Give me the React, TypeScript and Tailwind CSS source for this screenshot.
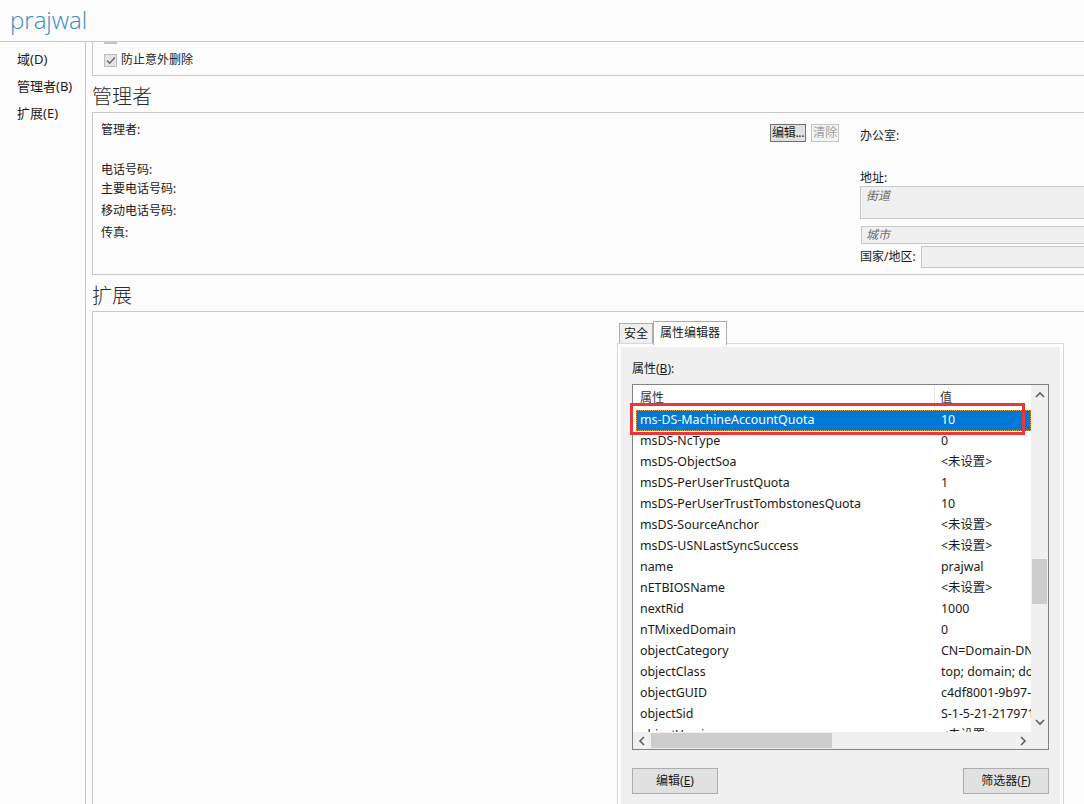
import React from "react";

const FONT = '"Noto Sans", "Noto Sans CJK SC", sans-serif';

const rows: [string, string][] = [
  ["ms-DS-MachineAccountQuota", "10"],
  ["msDS-NcType", "0"],
  ["msDS-ObjectSoa", "<未设置>"],
  ["msDS-PerUserTrustQuota", "1"],
  ["msDS-PerUserTrustTombstonesQuota", "10"],
  ["msDS-SourceAnchor", "<未设置>"],
  ["msDS-USNLastSyncSuccess", "<未设置>"],
  ["name", "prajwal"],
  ["nETBIOSName", "<未设置>"],
  ["nextRid", "1000"],
  ["nTMixedDomain", "0"],
  ["objectCategory", "CN=Domain-DNS,CN=Schema,CN=Configuration"],
  ["objectClass", "top; domain; domainDNS"],
  ["objectGUID", "c4df8001-9b97-4c1e-8f0a-2d1e3a4b5c6d"],
  ["objectSid", "S-1-5-21-2179712345-1234567890"],
  ["objectVersion", "<未设置>"],
];

function Chevron({ dir }: { dir: "up" | "down" | "left" | "right" }) {
  const d =
    dir === "up"
      ? "M1 6 L5 2 L9 6"
      : dir === "down"
      ? "M1 2 L5 6 L9 2"
      : dir === "left"
      ? "M6 1 L2 5 L6 9"
      : "M2 1 L6 5 L2 9";
  const w = dir === "up" || dir === "down" ? 10 : 8;
  const h = dir === "up" || dir === "down" ? 8 : 10;
  return (
    <svg width={w} height={h} viewBox={`0 0 ${w} ${h}`}>
      <path d={d} fill="none" stroke="#606060" strokeWidth="1.6" />
    </svg>
  );
}

export default function App() {
  return (
    <div
      className="w-[1084px] h-[804px] overflow-hidden bg-[#fcfcfc] flex flex-col text-[#1a1a1a]"
      style={{ fontFamily: FONT }}
    >
      {/* Header */}
      <div className="h-[42px] border-b border-[#c8c8c8] pl-[10px] flex items-center shrink-0">
        <span
          className="text-[24px] font-light text-[#3a8ac4] leading-none -mt-[2px]"
          style={{ fontFamily: '"Open Sans", "Noto Sans", sans-serif' }}
        >
          prajwal
        </span>
      </div>

      <div className="flex flex-1 min-h-0">
        {/* Nav */}
        <div className="w-[86px] shrink-0 border-r border-[#c8c8c8] pt-[4px] pl-[17px] text-[13px]">
          <div className="h-[27px] flex items-center">域(D)</div>
          <div className="h-[27px] flex items-center">管理者(B)</div>
          <div className="h-[27px] flex items-center">扩展(E)</div>
        </div>

        {/* Main */}
        <div className="flex-1 min-w-0 pl-[6px] flex flex-col">
          {/* Box 1 (partially scrolled) */}
          <div className="h-[34px] shrink-0 border-l border-b border-[#c8c8c8] pl-[11px] flex flex-col">
            <div className="h-[2px] w-[13px] bg-[#c4c4c4]" />
            <div className="mt-[8px] flex items-center gap-[4px] text-[12px] leading-[16px]">
              <div className="w-[13px] h-[13px] border border-[#bcbcbc] bg-[#e6e6e6] flex items-center justify-center">
                <svg width="10" height="9" viewBox="0 0 10 9">
                  <path d="M1.2 4.6 L3.8 7.2 L8.8 1.4" fill="none" stroke="#6e6e6e" strokeWidth="1.6" />
                </svg>
              </div>
              <span>防止意外删除</span>
            </div>
          </div>

          {/* Heading 管理者 */}
          <div className="h-[36px] shrink-0 pt-[5px] flex items-center text-[20px] font-light text-[#2a2a2a] leading-none">
            管理者
          </div>

          {/* Box 2 */}
          <div className="h-[163px] shrink-0 border-l border-t border-b border-[#c8c8c8] flex text-[12px] leading-[16px]">
            <div className="w-[677px] shrink-0 pl-[8px] flex flex-col">
              <div className="mt-[9px]">管理者:</div>
              <div className="mt-[24px]">电话号码:</div>
              <div className="mt-[3px]">主要电话号码:</div>
              <div className="mt-[6px]">移动电话号码:</div>
              <div className="mt-[6px]">传真:</div>
            </div>
            <div className="w-[90px] shrink-0 mt-[11px] flex gap-[5px] h-[18px]">
              <div className="h-[18px] px-[1px] border border-[#707070] bg-[#e1e1e1] flex items-center text-[12px] tracking-[-0.3px]">
                编辑...
              </div>
              <div className="h-[18px] px-[1px] border border-[#c4c4c4] bg-[#f4f4f4] flex items-center text-[12px] text-[#a0a0a0]">
                清除
              </div>
            </div>
            <div className="flex-1 flex flex-col">
              <div className="mt-[15px]">办公室:</div>
              <div className="mt-[26px]">地址:</div>
              <div className="h-[33px] border border-r-0 border-[#c8c8c8] bg-[#f0f0f0] pl-[5px] pt-[1px] italic text-[#6d6d6d]">
                街道
              </div>
              <div className="mt-[7px] ml-[1px] h-[18px] border border-r-0 border-[#c8c8c8] bg-[#f0f0f0] pl-[4px] italic text-[#6d6d6d] flex items-center">
                城市
              </div>
              <div className="mt-[2px] flex items-center">
                <div className="w-[61px] shrink-0">国家/地区:</div>
                <div className="flex-1 h-[22px] border border-r-0 border-[#c8c8c8] bg-[#f0f0f0]" />
              </div>
            </div>
          </div>

          {/* Heading 扩展 */}
          <div className="h-[36px] shrink-0 pt-[5px] flex items-center text-[20px] font-light text-[#2a2a2a] leading-none">
            扩展
          </div>

          {/* Box 3 */}
          <div className="flex-1 border-l border-t border-[#c8c8c8] pl-[524px] pt-[9px] text-[12px]">
            <div className="w-[447px] flex flex-col">
              {/* Tabs */}
              <div className="h-[22px] flex items-end pl-[2px] relative z-10">
                <div className="h-[20px] px-[4px] border border-b-0 border-[#acacac] bg-[#f0f0f0] flex items-center">
                  安全
                </div>
                <div className="h-[24px] -mb-[2px] px-[6px] border border-b-0 border-[#acacac] bg-white flex items-start pt-[2px]">
                  属性编辑器
                </div>
              </div>
              {/* Panel */}
              <div className="border border-[#d9d9d9] bg-white p-[3px] h-[470px]">
                <div className="relative bg-[#f0f0f0] h-full pl-[11px] pt-[14px]">
                  <div className="leading-[16px]">
                    属性(<span className="underline">B</span>):
                  </div>
                  {/* List */}
                  <div className="mt-[7px] w-[417px] h-[366px] border border-[#828282] flex flex-col bg-white">
                    <div className="flex flex-1 min-h-0">
                      <div className="flex-1 min-w-0 overflow-hidden">
                        <div className="h-[25px] flex items-center text-[#333]">
                          <div className="w-[302px] pl-[7px] h-full flex items-center border-r border-[#e5e5e5]">
                            属性
                          </div>
                          <div className="pl-[5px]">值</div>
                        </div>
                        {rows.map(([k, v], i) => (
                          <div
                            key={k}
                            className={
                              i === 0
                                ? "ml-[3px] h-[21px] flex items-center whitespace-nowrap bg-[#0078d7] text-white outline-1 outline-dotted outline-[#e0a040] -outline-offset-1"
                                : "ml-[3px] h-[21px] flex items-center whitespace-nowrap"
                            }
                            style={{ fontSize: "12.4px" }}
                          >
                            <div className="w-[305px] shrink-0 pl-[4px]">{k}</div>
                            <div>{v}</div>
                          </div>
                        ))}
                      </div>
                      {/* Vertical scrollbar */}
                      <div className="w-[17px] shrink-0 bg-[#f0f0f0] flex flex-col items-center">
                        <div className="h-[20px] flex items-center justify-center">
                          <Chevron dir="up" />
                        </div>
                        <div className="mt-[154px] w-[15px] h-[45px] bg-[#cdcdcd]" />
                        <div className="flex-1" />
                        <div className="h-[20px] flex items-center justify-center">
                          <Chevron dir="down" />
                        </div>
                      </div>
                    </div>
                    {/* Horizontal scrollbar */}
                    <div className="h-[17px] shrink-0 flex bg-[#f0f0f0]">
                      <div className="w-[17px] flex items-center justify-center">
                        <Chevron dir="left" />
                      </div>
                      <div className="mt-[1px] ml-[1px] w-[181px] h-[15px] bg-[#cdcdcd]" />
                      <div className="flex-1" />
                      <div className="w-[17px] flex items-center justify-center">
                        <Chevron dir="right" />
                      </div>
                      <div className="w-[17px]" />
                    </div>
                  </div>
                  {/* Buttons */}
                  <div className="mt-[18px] w-[417px] flex justify-between">
                    <div className="w-[86px] h-[26px] border border-[#adadad] bg-[#e1e1e1] flex items-center justify-center">
                      编辑(<span className="underline">E</span>)
                    </div>
                    <div className="w-[86px] h-[26px] border border-[#adadad] bg-[#e1e1e1] flex items-center justify-center">
                      筛选器(<span className="underline">F</span>)
                    </div>
                  </div>
                  {/* Red annotation rectangle */}
                  <div className="absolute left-[9px] top-[56px] w-[395px] h-[32px] border-[3px] border-[#e8383d] pointer-events-none" />
                </div>
              </div>
            </div>
          </div>
        </div>
      </div>
    </div>
  );
}
